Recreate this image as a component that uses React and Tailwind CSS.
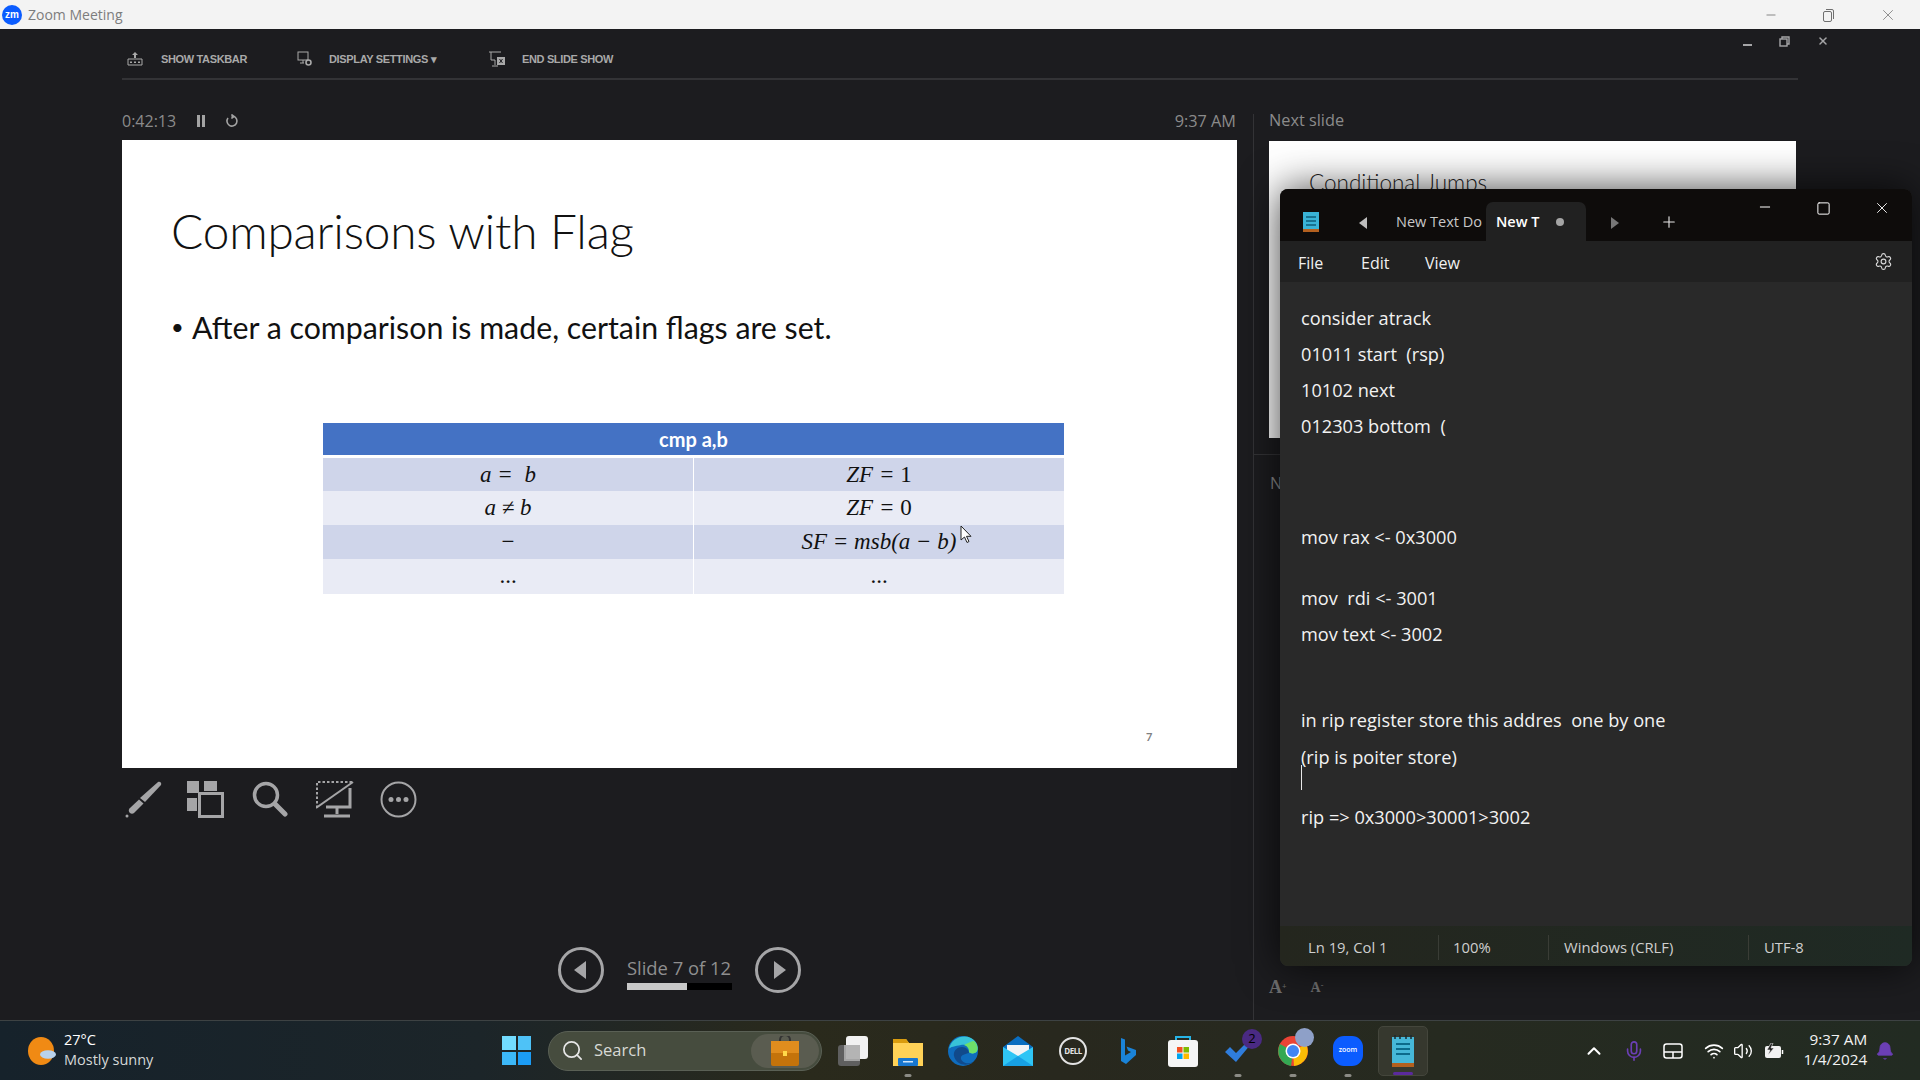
import React from "react";
import { Search, Settings, X, Minus, Square, Plus, ChevronUp, Mic, Wifi, Volume2, Bell } from "lucide-react";

const notes = [
  { text: "consider atrack", cls: "mt-0" },
  { text: "01011 start  (rsp)", cls: "mt-[11px]" },
  { text: "10102 next", cls: "mt-[11px]" },
  { text: "012303 bottom  (", cls: "mt-[11px]" },
  { text: "mov rax <- 0x3000", cls: "mt-[86px]" },
  { text: "mov  rdi <- 3001", cls: "mt-[36px]" },
  { text: "mov text <- 3002", cls: "mt-[11px]" },
  { text: "in rip register store this addres  one by one", cls: "mt-[61px]" },
  { text: "(rip is poiter store)", cls: "mt-[12px]" },
  { text: "rip => 0x3000>30001>3002", cls: "mt-[35px]" },
];

const tableRows = [
  { left: <span>a = &nbsp;b</span>, right: <span>ZF = <span className="not-italic">1</span></span>, bg: "bg-[#cfd5ea]", h: "h-[32px]" },
  { left: <span>a ≠ b</span>, right: <span>ZF = <span className="not-italic">0</span></span>, bg: "bg-[#e9ebf5]", h: "h-[33px]" },
  { left: <span className="not-italic">−</span>, right: <span>SF = msb(a − b)</span>, bg: "bg-[#cfd5ea]", h: "h-[33px]" },
  { left: <span className="not-italic">...</span>, right: <span className="not-italic">...</span>, bg: "bg-[#e9ebf5]", h: "h-[30px]" },
];

const Dot = ({ color = "bg-[#8b8b85]" }) => (
  <span className={`absolute bottom-[4px] left-1/2 -translate-x-1/2 h-[3px] w-[7px] rounded-full ${color}`} />
);

const Slot = ({ children, dot }) => (
  <div className="relative flex h-[60px] w-[55px] items-center justify-center">
    {children}
    {dot && <Dot />}
  </div>
);

const ToolbarItem = ({ icon, label, cls, iconCls }) => (
  <div className={`flex items-center ${cls}`}>
    <span className={`flex justify-center ${iconCls}`}>{icon}</span>
    <span className="whitespace-nowrap font-['Liberation_Sans'] text-[11px] font-bold tracking-[-0.35px] text-[#a9a9a9]">{label}</span>
  </div>
);

export default function App() {
  return (
    <div className="relative flex h-[1080px] w-[1920px] flex-col overflow-hidden bg-[#1c1c1f] font-['Open_Sans',sans-serif]">
      {/* zoom title bar */}
      <div className="flex h-[29px] shrink-0 items-center bg-[#f3f3f3] pl-[2px]">
        <div className="flex h-[20px] w-[20px] items-center justify-center rounded-full bg-[#0b5cff] font-['Liberation_Sans'] text-[10px] font-bold leading-none text-white">zm</div>
        <span className="ml-[6px] text-[14px] text-[#7d7d7d]">Zoom Meeting</span>
        <div className="ml-auto flex items-center text-[#6f6f6f]">
          <Minus size={14} strokeWidth={1.400} className="mr-[43px]" />
          <svg width="14" height="14" viewBox="0 0 14 14" fill="none" stroke="currentColor" className="mr-[44px]"><rect x="2.5" y="3.5" width="8" height="10" rx="1.5" /><path d="M5 1.5h6a1.5 1.5 0 0 1 1.5 1.5v8" /></svg>
          <X size={18} strokeWidth={1} className="mr-[23px]" />
        </div>
      </div>

      {/* presenter view */}
      <div className="relative flex h-[991px] shrink-0 flex-col px-[122px]">
        <div className="flex h-[51px] shrink-0 items-center border-b-2 border-[#333336] pt-[11px]">
          <ToolbarItem
            cls="w-[175px]"
            iconCls="w-[39px] justify-start pl-[5px]"
            label="SHOW TASKBAR"
            icon={
              <svg width="16" height="14" viewBox="0 0 16 14" fill="#a9a9a9"><path d="M8 0l3 3H9v3H7V3H5z" /><path d="M1 7h14v6H1z" fill="none" stroke="#a9a9a9" /><path d="M3 9.500h2v1.500H3zM7 9.500h2v1.500H7zM11 9.500h2v1.500h-2z" /></svg>
            }
          />
          <ToolbarItem
            cls="w-[192px]"
            iconCls="w-[32px] justify-start"
            label="DISPLAY SETTINGS ▾"
            icon={
              <svg width="16" height="16" viewBox="0 0 16 16" fill="none" stroke="#a9a9a9"><rect x="1" y="1" width="10" height="8" /><path d="M6 9v3M3 12h4" /><circle cx="11.500" cy="11.500" r="2.500" strokeWidth="1.600" /></svg>
            }
          />
          <ToolbarItem
            cls="w-[130px]"
            iconCls="w-[33px] justify-start"
            label="END SLIDE SHOW"
            icon={
              <svg width="16" height="16" viewBox="0 0 16 16" fill="none" stroke="#a9a9a9"><path d="M0 1h12M2 1v8h4M6 9v5M3 15h6" /><rect x="8" y="6" width="8" height="8" fill="#a9a9a9" stroke="none" /><path d="M10.500 8l3 4M13.500 8l-3 4" stroke="#1c1c1f" /></svg>
            }
          />
        </div>

        <div className="flex min-h-0 flex-1">
          {/* current slide column */}
          <div className="flex w-[1115px] shrink-0 flex-col">
            <div className="flex h-[60px] shrink-0 items-center pt-[22px] text-[#8b8b8b]">
              <span className="text-[16px]">0:42:13</span>
              <svg width="10" height="14" viewBox="0 0 10 14" fill="#a3a3a3" className="ml-[20px]"><path d="M1 1h3v12H1zM6 1h3v12H6z" /></svg>
              <svg width="14" height="14" viewBox="0 0 14 14" fill="none" stroke="#a3a3a3" strokeWidth="1.600" className="ml-[19px]"><path d="M8.500 2.300A5 5 0 1 1 3 4" /><path d="M6.500 0.500l2.500 2-2.500 2" fill="#a3a3a3" /></svg>
              <span className="ml-auto mr-[1px] text-[16.300px]">9:37 AM</span>
            </div>

            {/* the slide */}
            <div className="relative flex h-[628px] shrink-0 flex-col bg-white pl-[49px] font-['Lato',sans-serif] text-[#111]">
              <h1 className="mt-[60px] text-[47.800px] font-light leading-[62px] tracking-[-0.2px]">Comparisons with Flag</h1>
              <p className="mt-[45px] flex items-center text-[30.300px] leading-[40px]">
                <span className="inline-block w-[21px] text-[22px]">•</span>After a comparison is made, certain flags are set.
              </p>
              <div className="ml-[152px] mt-[76px] flex w-[741px] flex-col font-['Liberation_Serif',serif] text-[23px] italic text-[#111]">
                <div className="flex h-[32px] items-center justify-center bg-[#4472c4] font-['Lato',sans-serif] text-[20px] font-bold not-italic text-white">cmp a,b</div>
                <div className="mt-[3px] flex flex-col gap-[1px]">
                  {tableRows.map((row, i) => (
                    <div key={i} className={`grid grid-cols-[370px_1fr] gap-[1px] ${row.h}`}>
                      <div className={`flex items-center justify-center ${row.bg}`}>{row.left}</div>
                      <div className={`flex items-center justify-center ${row.bg}`}>{row.right}</div>
                    </div>
                  ))}
                </div>
              </div>
              <span className="absolute left-[1024px] top-[589px] text-[11px] font-bold text-[#808080]">7</span>
              <svg width="13" height="19" viewBox="0 0 13 19" className="absolute left-[838px] top-[385px]"><path d="M1 1v14l3.500-3 2.500 5.500 2-1-2.500-5.200h4.500z" fill="#fff" stroke="#222" /></svg>
            </div>

            {/* pen / grid / zoom / screen / more */}
            <div className="flex h-[50px] shrink-0 items-end pl-[3px] text-[#a5a5a7]">
              <svg width="37" height="37" viewBox="0 0 37 37" fill="#a5a5a7"><path d="M33 1c2-1 4 1 3 3L20 21l-5-4z" /><path d="M14 18.500l4.500 4L9 32c-1 1-3 1-4 0l-.5-.5c-1-1-1-3 0-4z" /><circle cx="2" cy="35" r="1.500" /></svg>
              <svg width="37" height="37" viewBox="0 0 37 37" fill="#a5a5a7" className="ml-[25px]"><path d="M0 0h12v12H0zM17 0h13v10H17zM0 17h10v13H0z" /><path d="M11 11h25v25H11z" fill="#1c1c1f" /><path d="M12.500 12.500h23v23h-23z" fill="none" stroke="#a5a5a7" strokeWidth="3" /></svg>
              <svg width="36" height="37" viewBox="0 0 36 37" fill="none" stroke="#a5a5a7" className="ml-[28px]"><circle cx="14" cy="14" r="11.500" strokeWidth="3.500" /><path d="M23 23l10 10" strokeWidth="5" strokeLinecap="round" /></svg>
              <svg width="38" height="37" viewBox="0 0 38 37" fill="none" stroke="#a5a5a7" className="ml-[28px]"><path d="M1 27V1h35" strokeWidth="2" strokeDasharray="2.500 2" /><path d="M0 27L37 1" strokeWidth="2" /><path d="M34 7v19H10M21 27v6M8 35h26" strokeWidth="3" /></svg>
              <svg width="37" height="37" viewBox="0 0 37 37" fill="none" stroke="#a5a5a7" className="ml-[26px]"><circle cx="18.500" cy="18.500" r="17" strokeWidth="2" /><circle cx="11" cy="18.500" r="2.500" fill="#a5a5a7" stroke="none" /><circle cx="18.500" cy="18.500" r="2.500" fill="#a5a5a7" stroke="none" /><circle cx="26" cy="18.500" r="2.500" fill="#a5a5a7" stroke="none" /></svg>
            </div>

            {/* slide navigation */}
            <div className="mt-[129px] ml-[436px] flex items-center">
              <div className="flex h-[46px] w-[46px] items-center justify-center rounded-full border-[3px] border-[#a5a5a7]">
                <span className="mr-[3px] h-0 w-0 border-y-[9px] border-r-[12px] border-y-transparent border-r-[#a5a5a7]" />
              </div>
              <div className="ml-[23px] flex w-[105px] flex-col pt-[5px]">
                <span className="whitespace-nowrap text-[18.400px] leading-[26px] text-[#8f8f8f]">Slide 7 of 12</span>
                <div className="mt-[2px] h-[7px] w-full bg-black">
                  <div className="h-full w-[60px] bg-[#c8c8c8]" />
                </div>
              </div>
              <div className="ml-[23px] flex h-[46px] w-[46px] items-center justify-center rounded-full border-[3px] border-[#a5a5a7]">
                <span className="ml-[3px] h-0 w-0 border-y-[9px] border-l-[12px] border-y-transparent border-l-[#a5a5a7]" />
              </div>
            </div>
          </div>

          {/* next slide / notes column */}
          <div className="ml-[16px] mt-[34px] flex w-[543px] shrink-0 flex-col border-l border-[#333336] pl-[15px]">
            <div className="flex h-[27px] shrink-0 items-center pb-[14px] text-[16.300px] text-[#8b8b8b]">Next slide</div>
            <div className="h-[297px] shrink-0 overflow-hidden bg-white pl-[40px] pt-[25px] font-['Lato',sans-serif] text-[22.500px] font-light text-[#222]">Conditional Jumps</div>
            <div className="ml-[-15px] mt-[16px] border-t border-[#333336] pl-[16px] pt-[16px] text-[16px] text-[#8b8b8b]">Notes</div>
            <div className="mt-auto mb-[24px] flex items-end gap-[24px] font-['Liberation_Serif',serif] font-bold text-[#6e6e6e]">
              <span className="text-[18px] leading-[18px]">A<sup className="text-[8px]">+</sup></span>
              <span className="text-[14px] leading-[16px]">A<sup className="text-[8px]">-</sup></span>
            </div>
          </div>
        </div>

        {/* slide show window buttons */}
        <div className="absolute right-[91px] top-[6px] flex items-center gap-[27px] text-[#a5a5a7]">
          <span className="mt-[7px] h-[2px] w-[9px] bg-[#a5a5a7]" />
          <svg width="11" height="11" viewBox="0 0 11 11" fill="none" stroke="#a5a5a7" strokeWidth="1.400"><rect x="1" y="3" width="7" height="7" /><path d="M3 3V1h7v7H8" /></svg>
          <X size={12} strokeWidth={3} />
        </div>
      </div>

      {/* taskbar */}
      <div className="flex h-[60px] shrink-0 items-center border-t border-[#3d4243] bg-[linear-gradient(90deg,#16222b_0%,#1c2529_25%,#2a2a1c_42%,#28281e_55%,#262a20_75%,#222b22_100%)] text-white">
        <div className="ml-[28px] flex w-[474px] shrink-0 items-center">
          <svg width="28" height="28" viewBox="0 0 28 40" preserveAspectRatio="none"><ellipse cx="13" cy="20" rx="13" ry="20" fill="#f08a14" /><ellipse cx="20" cy="25" rx="8" ry="6" fill="#b9d2ec" /></svg>
          <div className="ml-[8px] flex flex-col text-[14.500px] leading-[20px]">
            <span className="mt-[-2px]">27°C</span>
            <span className="text-[#d5d8d8]">Mostly sunny</span>
          </div>
        </div>

        <div className="grid h-[29px] w-[29px] shrink-0 grid-cols-2 gap-[2px]">
          <span className="bg-[#72dcff]" />
          <span className="bg-[#4ec2f7]" />
          <span className="bg-[#3cb8f8]" />
          <span className="bg-[#1b9cf5]" />
        </div>

        <div className="ml-[17px] flex h-[40px] w-[274px] shrink-0 items-center rounded-full border border-[#5a6055] bg-[#464c3e] pl-[12px] pr-[2px]">
          <Search size={23} strokeWidth={1.800} className="text-[#e6e6e6]" />
          <span className="ml-[10px] text-[16.500px] text-[#d8dad5]">Search</span>
          <div className="ml-auto flex h-[34px] w-[68px] items-center justify-center rounded-full bg-[#5a5c50]">
            <svg width="28" height="30" viewBox="0 0 28 30"><path d="M9 4a5 5 0 0 1 10 0v3H9z" fill="none" stroke="#333" strokeWidth="2" /><rect x="0" y="5" width="28" height="25" rx="2" fill="#c4730b" /><rect x="0" y="5" width="28" height="12" fill="#e08d1e" /><rect x="12" y="15" width="4" height="5" fill="#ffd84a" /></svg>
          </div>
        </div>

        <div className="ml-[3.500px] flex shrink-0 items-center">
          <Slot>
            <svg width="30" height="30" viewBox="0 0 30 30"><rect x="0" y="9" width="22" height="21" rx="3" fill="#5f5f5f" /><rect x="6" y="9" width="16" height="16" fill="#a4a4a4" /><rect x="8" y="0" width="22" height="23" rx="3" fill="#f2f2f2" /><rect x="8" y="9" width="14" height="14" fill="#b4b4b4" /></svg>
          </Slot>
          <Slot dot>
            <svg width="30" height="30" viewBox="0 0 30 30"><path d="M0 3h13l3 4h14v23H0z" fill="#ffd257" /><path d="M0 3h13l3 4H0z" fill="#d99c0f" /><rect x="5" y="22" width="20" height="8" rx="1" fill="#1877d0" /><rect x="10" y="25" width="10" height="1.500" fill="#cfe6fb" /></svg>
          </Slot>
          <Slot>
            <svg width="30" height="30" viewBox="0 0 30 30"><circle cx="15" cy="15" r="15" fill="#0f6cbd" /><path d="M1 13C3 3 14-2 23 2c6 3 8 9 6 13-1 3-7 3-8 1 2-5-3-8-8-7C7 10 2 11 1 13z" fill="#38c3d8" /><path d="M26 5c4 4 4 9 3 10-1 3-7 3-8 1 0-4-2-6-5-7 4-2 8-4 10-4z" fill="#6ee06a" /><path d="M21 17c-4 1-9 2-8 6 1 3 6 6 12 3-6 5-17 3-19-6-1-5 3-9 8-9 4 0 7 3 7 6z" fill="#114a8b" /></svg>
          </Slot>
          <Slot>
            <svg width="30" height="30" viewBox="0 0 30 30"><path d="M0 11L15 0l15 11v19H0z" fill="#0a6ec0" /><path d="M4 9h22v8l-11 6L4 17z" fill="#f2f4f6" /><path d="M0 11l15 9 15-9v19H0z" fill="#2fc5f5" /><path d="M0 30l15-10 15 10z" fill="#17a0e4" /></svg>
          </Slot>
          <Slot>
            <div className="flex h-[28px] w-[28px] items-center justify-center rounded-full border-2 border-[#e3e3e3] text-[8px] font-bold tracking-[-0.5px] text-[#e3e3e3]">DELL</div>
          </Slot>
          <Slot>
            <svg width="16" height="26" viewBox="0 0 16 26"><path d="M1 0l4 1.500v16l6-3.500-3-1.500-1.500-4L16 12v5L6 26l-5-3z" fill="#1a83d8" /></svg>
          </Slot>
          <Slot>
            <svg width="30" height="32" viewBox="0 0 30 32"><path d="M8 6V2h14v4" fill="none" stroke="#27b4e6" strokeWidth="2" /><rect x="0" y="5" width="30" height="27" rx="3" fill="#f5f5f5" /><rect x="9" y="12" width="5.500" height="5.500" fill="#f25022" /><rect x="15.500" y="12" width="5.500" height="5.500" fill="#7fba00" /><rect x="9" y="18.500" width="5.500" height="5.500" fill="#00a4ef" /><rect x="15.500" y="18.500" width="5.500" height="5.500" fill="#ffb900" /></svg>
          </Slot>
          <Slot dot>
            <div className="relative flex items-center justify-center">
              <svg width="26" height="22" viewBox="0 0 26 22"><path d="M0 12l5-5 6 6L23 1l3 3-15 18z" fill="#2f7ddc" /></svg>
              <span className="absolute left-[17px] top-[-11px] flex h-[20px] w-[20px] items-center justify-center rounded-full bg-[#4a2a83] text-[13px] text-black">2</span>
            </div>
          </Slot>
          <Slot dot>
            <div className="relative">
              <svg width="30" height="30" viewBox="0 0 30 30"><circle cx="15" cy="15" r="15" fill="#ea4335" /><path d="M15 15L28 8a15 15 0 0 1-12 22z" fill="#fbbc05" /><path d="M15 15l-2 15A15 15 0 0 1 2 8z" fill="#34a853" /><circle cx="15" cy="15" r="7.500" fill="#fff" /><circle cx="15" cy="15" r="6" fill="#4285f4" /></svg>
              <span className="absolute left-[17px] top-[-8px] h-[19px] w-[19px] rounded-full bg-[#8ea0c8]" />
            </div>
          </Slot>
          <Slot dot>
            <div className="flex h-[30px] w-[30px] items-center justify-center rounded-[11px] bg-[#0b5cff] text-[7px] font-semibold text-white">zoom</div>
          </Slot>
          <div className="relative ml-[2px] flex h-[50px] w-[50px] items-center justify-center rounded-[5px] border border-[#44463c] bg-[#36382e]">
            <svg width="22" height="32" viewBox="0 0 22 32"><rect x="0" y="2" width="22" height="26" fill="#46b7d8" /><rect x="0" y="28" width="22" height="4" fill="#b3601f" /><path d="M4 9h14M4 14h14M4 19h14" stroke="#0c6a8b" strokeWidth="2" /><path d="M3 0v4M8 0v4M14 0v4M19 0v4" stroke="#1a2a30" strokeWidth="1.500" /></svg>
            <span className="absolute bottom-[0px] left-1/2 h-[3px] w-[20px] -translate-x-1/2 rounded-full bg-[#5b2a9d]" />
          </div>
        </div>

        {/* tray */}
        <div className="ml-[155px] flex shrink-0 items-center">
          <ChevronUp size={22} strokeWidth={2.200} />
          <Mic size={22} strokeWidth={1.800} className="ml-[18px] text-[#6b3fb5]" />
          <svg width="20" height="16" viewBox="0 0 20 16" fill="none" stroke="#fff" strokeWidth="1.500" className="ml-[18px]"><rect x="1" y="1" width="18" height="14" rx="2.500" /><path d="M1 9h18M10 9v6" /></svg>
          <Wifi size={20} strokeWidth={2} className="ml-[21px]" />
          <Volume2 size={20} strokeWidth={1.600} className="ml-[9px]" />
          <svg width="20" height="16" viewBox="0 0 20 16" className="ml-[11px]"><rect x="1" y="3" width="16" height="12" rx="2" fill="#f2f2f2" /><path d="M18.500 7v4" stroke="#fff" strokeWidth="1.500" /><path d="M7 0L3 7h3l-2 5 6-7H7l2-5z" fill="#222" stroke="#f2f2f2" strokeWidth="0.600" /></svg>
          <div className="ml-[20px] mt-[-3px] flex flex-col items-end text-[15.300px] leading-[20px] text-[#f2f2f2]">
            <span>9:37 AM</span>
            <span>1/4/2024</span>
          </div>
          <Bell size={20} fill="#6b3fb5" strokeWidth={1} className="ml-[8px] text-[#6b3fb5]" />
        </div>
      </div>

      {/* notepad window */}
      <div className="absolute left-[1280px] top-[189px] flex h-[777px] w-[632px] flex-col overflow-hidden rounded-[8px] bg-[#292929] text-white shadow-[0_0_40px_rgba(0,0,0,0.75)]">
        <div className="relative flex h-[52px] shrink-0 items-end bg-[#0e0c0b]">
          <svg width="16" height="21" viewBox="0 0 16 21" className="absolute left-[23px] top-[22px]"><rect x="0" y="1" width="16" height="17" fill="#39b3d6" /><rect x="0" y="18" width="16" height="3" fill="#b3601f" /><path d="M3 6h10M3 10h10M3 14h10" stroke="#0c5d7a" strokeWidth="1.500" /></svg>
          <span className="absolute left-[79px] top-[28px] h-0 w-0 border-y-[6px] border-r-[8px] border-y-transparent border-r-[#bdbdbd]" />
          <span className="absolute left-[116px] top-[23px] whitespace-nowrap text-[14.500px] leading-[20px] text-[#c8c8c8]">New Text Do</span>
          <div className="absolute left-[206px] top-[13px] flex h-[39px] w-[100px] items-center rounded-t-[7px] bg-[#212121] pl-[10px]">
            <span className="w-[44px] whitespace-nowrap text-[14.500px] font-semibold">New T</span>
            <span className="ml-[16px] h-[8px] w-[8px] rounded-full bg-[#a5a5a5]" />
          </div>
          <span className="absolute left-[331px] top-[28px] h-0 w-0 border-y-[6px] border-l-[8px] border-y-transparent border-l-[#777]" />
          <Plus size={18} strokeWidth={1.500} className="absolute left-[380px] top-[24px] text-[#e8e8e8]" />
          <Minus size={16} strokeWidth={1.500} className="absolute left-[477px] top-[10px]" />
          <Square size={15} strokeWidth={1.600} className="absolute left-[536px] top-[12px]" />
          <X size={18} strokeWidth={1.200} className="absolute left-[593px] top-[10px]" />
        </div>
        <div className="flex h-[41px] shrink-0 items-center bg-[#212121] pl-[18px] pt-[3px] text-[16px] text-[#f0f0f0]">
          <span className="w-[63px]">File</span>
          <span className="w-[64px]">Edit</span>
          <span>View</span>
          <Settings size={19} strokeWidth={1.400} className="ml-auto mr-[19px] mt-[-3px] text-[#d8d8d8]" />
        </div>
        <div className="relative flex flex-1 flex-col pl-[21px] pt-[24px] text-[18.200px] font-medium leading-[25px] text-[#f2f2f2]">
          {notes.map((line, i) => (
            <div key={i} className={`whitespace-pre ${line.cls}`}>{line.text}</div>
          ))}
          <span className="absolute left-[21px] top-[483px] h-[25px] w-px bg-[#e8e8e8]" />
        </div>
        <div className="flex h-[40px] shrink-0 items-center bg-[linear-gradient(90deg,#24261e,#1f2a24)] pt-[2px] text-[14.800px] text-[#cfcfcf]">
          <span className="w-[159px] border-r border-[#3a3d36] pl-[28px] leading-[25px]">Ln 19, Col 1</span>
          <span className="w-[110px] border-r border-[#3a3d36] pl-[14px] leading-[25px]">100%</span>
          <span className="w-[200px] border-r border-[#3a3d36] pl-[15px] leading-[25px]">Windows (CRLF)</span>
          <span className="pl-[15px]">UTF-8</span>
        </div>
      </div>
    </div>
  );
}
